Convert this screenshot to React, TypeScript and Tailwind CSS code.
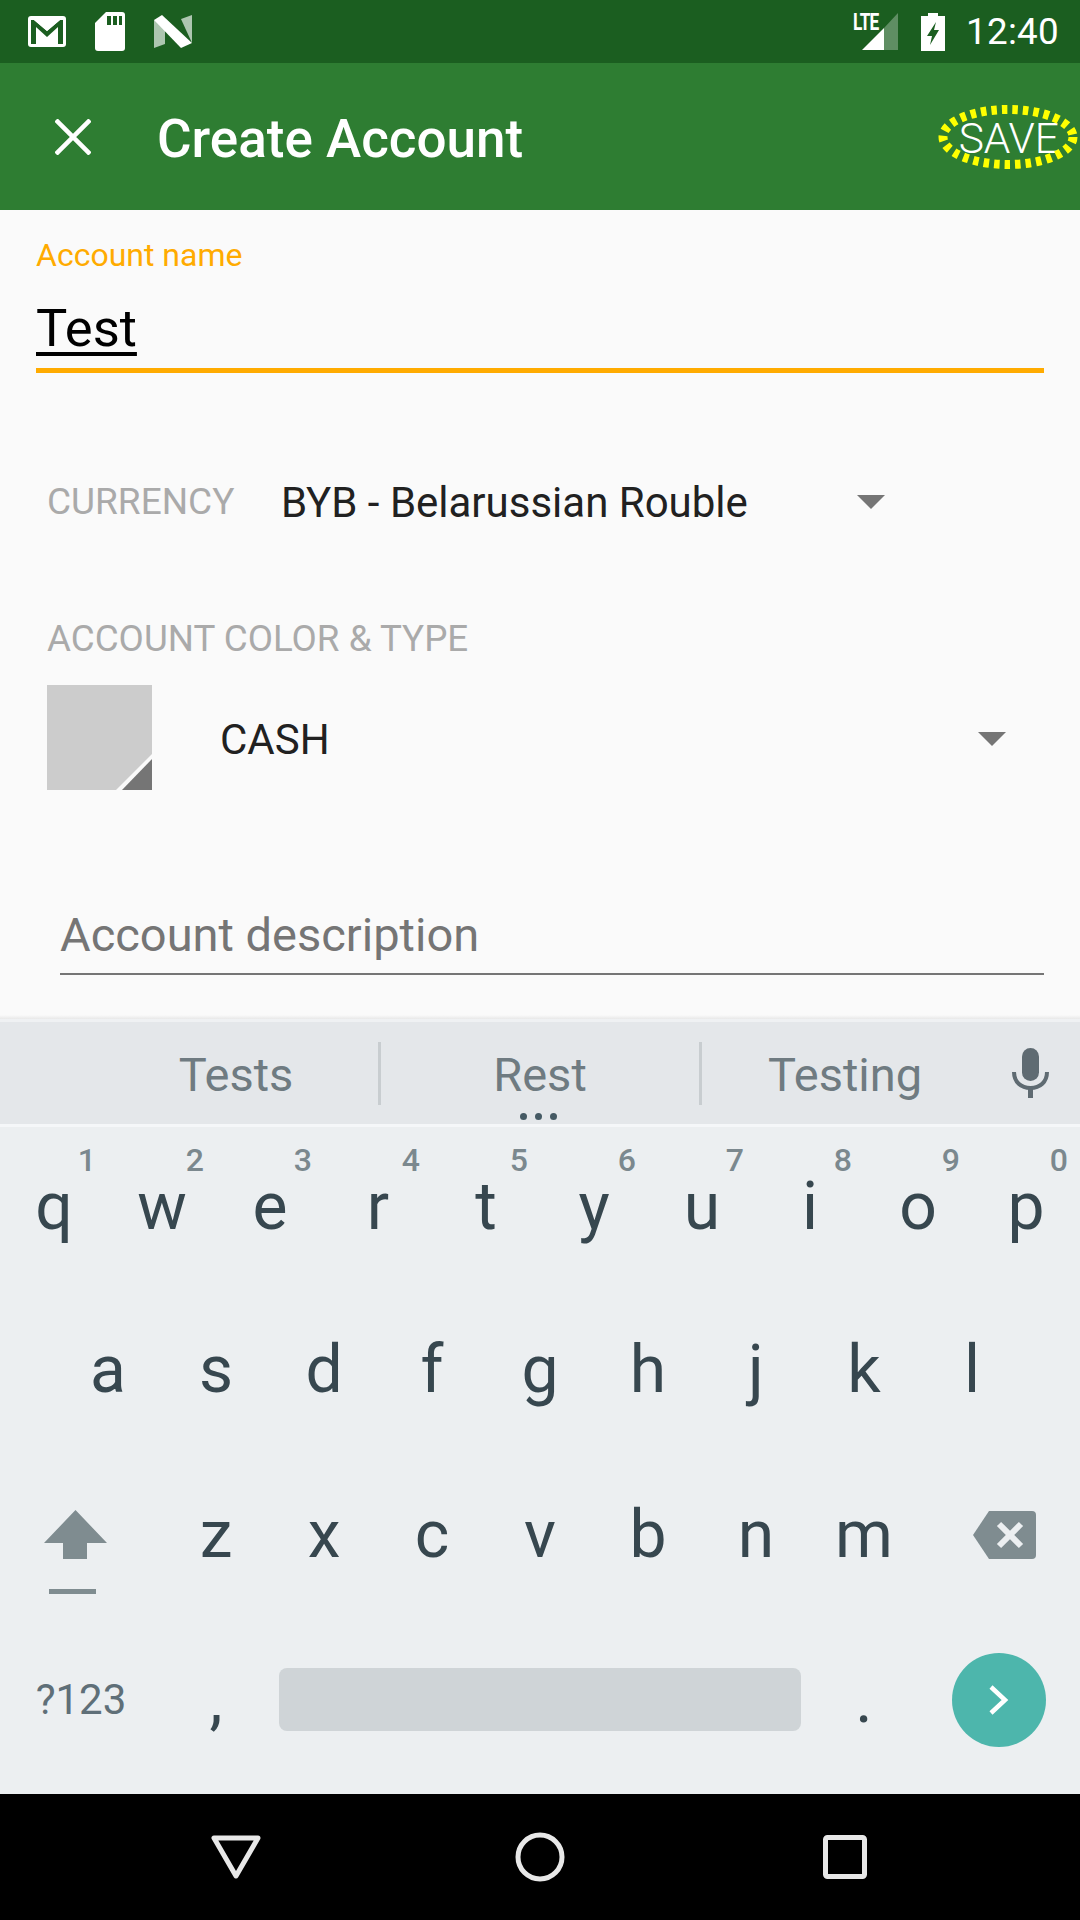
import type { ReactNode } from "react";

const ROW1: [string, string][] = [
  ["q", "1"], ["w", "2"], ["e", "3"], ["r", "4"], ["t", "5"],
  ["y", "6"], ["u", "7"], ["i", "8"], ["o", "9"], ["p", "0"],
];
const ROW2 = ["a", "s", "d", "f", "g", "h", "j", "k", "l"];
const ROW3 = ["z", "x", "c", "v", "b", "n", "m"];

function Key({ children, hint }: { children: ReactNode; hint?: string }) {
  return (
    <div className="relative flex items-center justify-center h-full text-[66px] text-[#37474f] leading-none">
      {children}
      {hint && <span className="absolute top-[17px] right-[12px] text-[32px] font-medium text-[#7b888e] leading-none">{hint}</span>}
    </div>
  );
}

function Caret({ className }: { className: string }) {
  return (
    <svg className={className} width="28" height="14" viewBox="0 0 28 14">
      <path d="M0 0h28L14 14z" fill="#757575" />
    </svg>
  );
}

function StatusBar() {
  return (
    <div className="h-[63px] bg-[#1b5e20] flex items-center text-white">
      <svg className="ml-[28px]" width="38" height="32" viewBox="0 0 38 32">
        <rect x="0" y="0" width="38" height="31" rx="3" fill="#fff" />
        <path d="M3 4h3l13 11L32 4h3v24h-5V11L19 21 8 11v17H3z" fill="#1b5e20" />
        <path d="M6 4h26L19 15z" fill="#fff" />
      </svg>
      <svg className="ml-[29px]" width="30" height="39" viewBox="0 0 30 39">
        <path d="M11 0h16a3 3 0 0 1 3 3v33a3 3 0 0 1-3 3H3a3 3 0 0 1-3-3V11z" fill="#fff" />
        <path d="M12 4h4v9h-4zM18 4h4v9h-4zM24 4h3v9h-3z" fill="#1b5e20" />
      </svg>
      <svg className="ml-[29px]" width="38" height="33" viewBox="0 0 38 33">
        <path d="M0 5l11 4v20L0 33z" fill="#adc6b0" />
        <path d="M27 4l11-4v28z" fill="#adc6b0" />
        <path d="M0 5l8-5 30 28-11 5z" fill="#fff" />
      </svg>
      <div className="ml-auto relative w-[46px] h-[38px]">
        <span className="absolute left-0 top-[1px] text-[23px] font-bold leading-[18px] tracking-[-1px] scale-x-75 origin-left">LTE</span>
        <svg className="absolute left-[9px] top-0" width="37" height="38" viewBox="0 0 37 38">
          <path d="M0 37L22 15v22z" fill="#fff" />
          <path d="M22 15L36 0v37H22z" fill="#fff" fillOpacity="0.3" />
        </svg>
      </div>
      <svg className="ml-[22px]" width="24" height="38" viewBox="0 0 24 38">
        <path d="M7 0h10v3h7v35H0V3h7z" fill="#fff" />
        <path d="M15 9L6 23h5l-2 9 9-15h-5z" fill="#1b5e20" />
      </svg>
      <span className="ml-[21px] mr-[21px] pt-[2px] text-[36.75px] leading-none tracking-[0.3px]">12:40</span>
    </div>
  );
}

function Toolbar() {
  return (
    <div className="relative h-[147px] bg-[#2e7d32] flex items-center text-white">
      <svg className="ml-[55px]" width="36" height="36" viewBox="0 0 36 36">
        <path d="M1 1l34 34M35 1L1 35" stroke="#fff" strokeWidth="4.5" fill="none" />
      </svg>
      <span className="ml-[66px] pt-[6px] text-[53px] font-medium leading-none">Create Account</span>
      <span className="ml-auto mr-[21px] pt-[5px] text-[42.5px] font-light leading-none">SAVE</span>
      <svg className="absolute left-[936px] top-[41px]" width="144" height="72" viewBox="0 0 144 72">
        <ellipse cx="72" cy="33" rx="65" ry="27.5" fill="none" stroke="#ffff00" strokeWidth="9" strokeDasharray="5.5 5" />
      </svg>
    </div>
  );
}

function Form() {
  return (
    <div className="h-[805px] bg-[#fafafa] flex flex-col">
      <div className="mx-[36px] mt-[28px] h-[135px] border-b-[5px] border-[#ffab00] flex flex-col">
        <span className="text-[32px] leading-[34px] text-[#ffab00]">Account name</span>
        <span className="mt-[30px] text-[52.5px] leading-[52px] text-black underline decoration-[4px] underline-offset-[6px] self-start">Test</span>
      </div>
      <div className="flex items-center mt-[99px] h-[60px] pl-[47px]">
        <span className="text-[37px] text-[#aaaaaa] w-[234px]">CURRENCY</span>
        <span className="text-[42px] text-[#212121]">BYB - Belarussian Rouble</span>
        <Caret className="ml-[109px]" />
      </div>
      <div className="mt-[84px] pl-[47px] text-[36.75px] leading-[46px] text-[#aaaaaa]">ACCOUNT COLOR &amp; TYPE</div>
      <div className="flex items-center mt-[23px] pl-[47px]">
        <svg width="105" height="105" viewBox="0 0 105 105">
          <rect width="105" height="105" fill="#cccccc" />
          <path d="M69 105L105 69v8L77 105z" fill="#fafafa" />
          <path d="M75 105L105 74v31z" fill="#757575" />
        </svg>
        <span className="ml-[68px] mt-[3px] text-[42px] text-[#212121]">CASH</span>
        <Caret className="ml-[648px] mt-[3px]" />
      </div>
      <div className="mx-[60px] mt-[113px] mr-[36px] border-b-2 border-[#757575] h-[72px] text-[47px] leading-[64px] text-[#757575]">
        Account description
      </div>
    </div>
  );
}

function Suggestions() {
  return (
    <div className="relative h-[102px] bg-[#e4e7ea] flex items-center text-[47px] text-[#6f7b81]">
      <div className="w-[378px] pl-[94px] pt-[4px] flex justify-center">Tests</div>
      <div className="w-[3px] h-[63px] bg-[#c8cdd0]" />
      <div className="w-[318px] pt-[4px] flex justify-center">Rest</div>
      <div className="w-[3px] h-[63px] bg-[#c8cdd0]" />
      <div className="w-[286px] pt-[4px] flex justify-center">Testing</div>
      <svg className="ml-[24px]" width="37" height="50" viewBox="0 0 37 50">
        <rect x="10" y="0" width="17" height="33" rx="8.5" fill="#5f6b72" />
        <path d="M2 24c0 10 7 16 16.500 16S35 34 35 24" fill="none" stroke="#5f6b72" strokeWidth="4" />
        <rect x="16" y="38" width="5" height="12" fill="#5f6b72" />
      </svg>
      <div className="absolute left-[520px] bottom-[4px] flex gap-[8px]">
        <span className="w-[7px] h-[7px] rounded-full bg-[#455a64]" />
        <span className="w-[7px] h-[7px] rounded-full bg-[#455a64]" />
        <span className="w-[7px] h-[7px] rounded-full bg-[#455a64]" />
      </div>
    </div>
  );
}

function Keyboard() {
  return (
    <div className="h-[670px] bg-[#eceff1] border-t-[3px] border-[#f5f7f9] grid grid-rows-[160px_165px_165px_165px]">
      <div className="grid grid-cols-10">
        {ROW1.map(([k, h]) => <Key key={k} hint={h}>{k}</Key>)}
      </div>
      <div className="grid grid-cols-9 px-[54px]">
        {ROW2.map(k => <Key key={k}>{k}</Key>)}
      </div>
      <div className="flex">
        <div className="w-[162px] flex flex-col items-center justify-center">
          <svg className="mt-[35px] -ml-[11px]" width="63" height="84" viewBox="0 0 63 84">
            <path d="M31.500 0L63 33H43v16H19V33H0z" fill="#7f8c90" />
            <rect x="5" y="79" width="47" height="5" fill="#7f8c90" />
          </svg>
        </div>
        <div className="flex-1 grid grid-cols-7">
          {ROW3.map(k => <Key key={k}>{k}</Key>)}
        </div>
        <div className="w-[162px] flex items-center justify-center">
          <svg className="ml-[11px]" width="63" height="48" viewBox="0 0 63 48">
            <path d="M16 0h43a4 4 0 0 1 4 4v40a4 4 0 0 1-4 4H16L0 24z" fill="#7f8c90" />
            <path d="M26 13l22 22M48 13L26 35" stroke="#eceff1" strokeWidth="6" fill="none" />
          </svg>
        </div>
      </div>
      <div className="flex items-center">
        <div className="w-[162px] flex justify-center text-[42px] text-[#5f6f78]">?123</div>
        <div className="w-[108px] flex justify-center text-[66px] leading-none text-[#37474f]">,</div>
        <div className="ml-[9px] w-[522px] h-[63px] rounded-[8px] bg-[#cfd4d7]" />
        <div className="ml-[9px] w-[108px] flex justify-center text-[66px] leading-none text-[#37474f]">.</div>
        <div className="ml-[34px] w-[94px] h-[94px] rounded-full bg-[#4db6ac] flex items-center justify-center">
          <svg width="20" height="30" viewBox="0 0 20 30">
            <path d="M2 2l14 13L2 28" fill="none" stroke="#fff" strokeWidth="4.500" />
          </svg>
        </div>
      </div>
    </div>
  );
}

function NavBar() {
  return (
    <div className="h-[126px] bg-black flex items-center">
      <svg className="ml-[211px]" width="50" height="44" viewBox="0 0 50 44">
        <path d="M3 3h44L25 41z" fill="none" stroke="#e8e8e8" strokeWidth="5" strokeLinejoin="round" />
      </svg>
      <svg className="ml-[254px]" width="50" height="50" viewBox="0 0 50 50">
        <circle cx="25" cy="25" r="22" fill="none" stroke="#e8e8e8" strokeWidth="5" />
      </svg>
      <svg className="ml-[258px]" width="44" height="44" viewBox="0 0 44 44">
        <rect x="2.500" y="2.500" width="39" height="39" rx="2" fill="none" stroke="#e8e8e8" strokeWidth="5" />
      </svg>
    </div>
  );
}

export default function App() {
  return (
    <div className="w-[1080px] h-[1920px] overflow-hidden flex flex-col" style={{ fontFamily: "Roboto, sans-serif" }}>
      <StatusBar />
      <Toolbar />
      <Form />
      <div className="h-[4px] bg-gradient-to-b from-[#fafafa] to-[#e8e8e8]" />
      <div className="h-[3px] bg-[#eff1f3]" />
      <Suggestions />
      <Keyboard />
      <NavBar />
    </div>
  );
}
